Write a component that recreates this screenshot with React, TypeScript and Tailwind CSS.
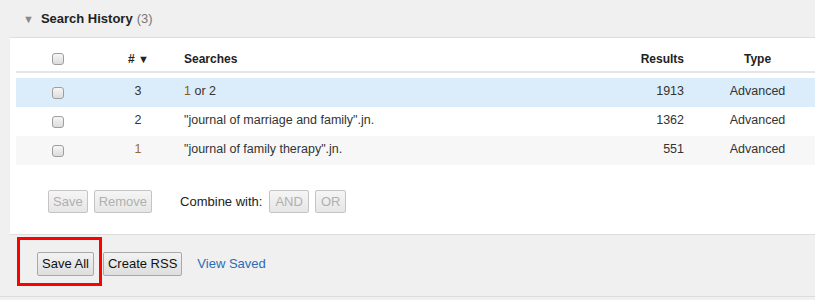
import React from "react";

const Check = () => (
  <div className="w-[12px] h-[12px] rounded-[3px] border border-[#9e9e9e] bg-gradient-to-b from-[#f6f6f6] to-[#dcdcdc]" />
);

const DisBtn = ({ children, px = "px-[4px]" }: { children: React.ReactNode; px?: string }) => (
  <div className={`h-[23px] ${px} flex items-center border border-[#c4c4c4] rounded-[2px] bg-gradient-to-b from-[#f5f5f5] to-[#e6e6e6] text-[#b0b0b0] text-[13px]`}>
    {children}
  </div>
);

const Btn = ({ children }: { children: React.ReactNode }) => (
  <div className="h-[24px] px-[4px] flex items-center border border-[#a9a9a9] rounded-[2px] bg-gradient-to-b from-[#f3f3f3] to-[#dedede] text-[#111] text-[13px]">
    {children}
  </div>
);

const rows = [
  { n: "3", nOrange: false, s: <><span className="text-[#8a5a12]">1</span> or 2</>, r: "1913", bg: "bg-[#dbedfb]" },
  { n: "2", nOrange: false, s: <>"journal of marriage and family".jn.</>, r: "1362", bg: "bg-white" },
  { n: "1", nOrange: true, s: <>"journal of family therapy".jn.</>, r: "551", bg: "bg-[#f7f7f7]" },
];

export default function App() {
  return (
    <div className="w-[815px] h-[300px] bg-[#f0f0f0] overflow-hidden relative" style={{ fontFamily: '"Liberation Sans", Arial, sans-serif' }}>
      <div className="h-[37px] flex items-center pl-[23px] pt-[1px]">
        <span className="text-[#8a8a8a] text-[11px] mr-[7px]">▼</span>
        <span className="text-[13px] font-bold text-[#222]">Search History</span>
        <span className="text-[13px] text-[#777] ml-[4px]">(3)</span>
      </div>
      <div className="ml-[10px] bg-white border-t border-b border-[#dedede] h-[198px] pl-[6px]">
        <div className="grid grid-cols-[84px_76px_424px_100px_115px] h-[35px] items-end border-b-2 border-[#e5e5e5] pb-[3px] text-[12px] font-bold text-[#222]">
          <div className="flex justify-center pb-[3px]"><Check /></div>
          <div className="text-center pl-[1px]">#&nbsp;<span className="text-[11px]">▼</span></div>
          <div className="pl-[8px]">Searches</div>
          <div className="text-right pr-[16px]">Results</div>
          <div className="text-center">Type</div>
        </div>
        <div className="h-[5px]" />
        {rows.map((row, i) => (
          <div key={i} className={`grid grid-cols-[84px_76px_424px_100px_115px] h-[29px] items-center pb-[2px] text-[12.5px] text-[#333] ${row.bg}`}>
            <div className="flex justify-center pt-[2px]"><Check /></div>
            <div className={`text-center ${row.nOrange ? "text-[#a0691c]" : ""}`}>{row.n}</div>
            <div className="pl-[8px]">{row.s}</div>
            <div className="text-right pr-[16px]">{row.r}</div>
            <div className="text-center">Advanced</div>
          </div>
        ))}
        <div className="flex items-center h-[23px] mt-[25px] pl-[32px]">
          <DisBtn>Save</DisBtn>
          <div className="w-[6px]" />
          <DisBtn>Remove</DisBtn>
          <span className="ml-[28px] mr-[7px] text-[13px] text-[#222]">Combine with:</span>
          <DisBtn px="px-[5px]">AND</DisBtn>
          <div className="w-[6px]" />
          <DisBtn px="px-[5px]">OR</DisBtn>
        </div>
      </div>
      <div className="flex items-center h-[24px] mt-[17px] pl-[37px]">
        <Btn>Save All</Btn>
        <div className="w-[9px]" />
        <Btn>Create RSS</Btn>
        <a className="ml-[15px] text-[13px] text-[#2b6db5]">View Saved</a>
      </div>
      <div className="absolute left-0 right-0 top-[296px] h-[4px] border-t border-[#dcdcdc]" />
      <div className="absolute left-[17px] top-[237px] w-[85px] h-[49px] border-[3px] border-[#ff0000]" />
    </div>
  );
}
